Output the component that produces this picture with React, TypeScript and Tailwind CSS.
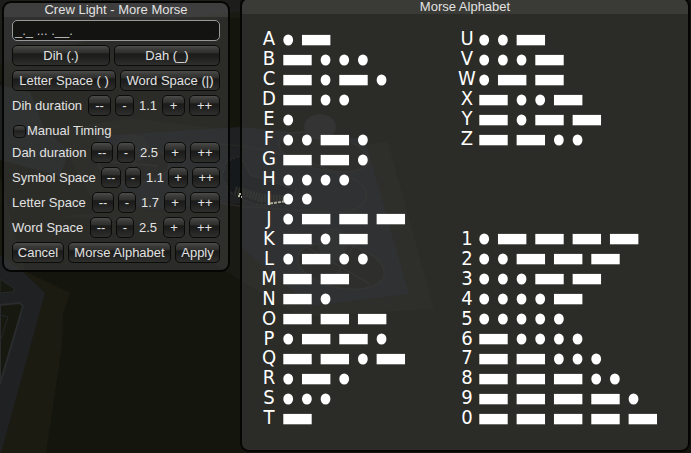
import type { ReactNode } from "react";

const LETTERS: [string, string][] = [
  ["A", ".-"], ["B", "-..."], ["C", "-.-."], ["D", "-.."], ["E", "."],
  ["F", "..-."], ["G", "--."], ["H", "...."], ["I", ".."], ["J", ".---"],
  ["K", "-.-"], ["L", ".-.."], ["M", "--"], ["N", "-."], ["O", "---"],
  ["P", ".--."], ["Q", "--.-"], ["R", ".-."], ["S", "..."], ["T", "-"],
];

const REST: [string, string][] = [
  ["U", "..-"], ["V", "...-"], ["W", ".--"], ["X", "-..-"], ["Y", "-.--"],
  ["Z", "--.."], ["", ""], ["", ""], ["", ""], ["", ""],
  ["1", ".----"], ["2", "..---"], ["3", "...--"], ["4", "....-"], ["5", "....."],
  ["6", "-...."], ["7", "--..."], ["8", "---.."], ["9", "----."], ["0", "-----"],
];

function Button({ children, className = "" }: { children: ReactNode; className?: string }) {
  return (
    <button
      className={`flex h-[21px] items-center justify-center whitespace-pre rounded-[5px] border border-[#0b0b0a] bg-[linear-gradient(180deg,#4c4c4b_0%,#3a3a39_18%,#30302f_34%,#1b1b1a_42%,#1f1f1f_60%,#2f2f2d_100%)] pb-px leading-none ${className}`}
    >
      {children}
    </button>
  );
}

function Stepper({ label, value, cols }: { label: string; value: string; cols: string }) {
  return (
    <div className={`grid h-[21px] items-center gap-x-1 whitespace-nowrap ${cols}`}>
      <span>{label}</span>
      <Button>--</Button>
      <Button>-</Button>
      <span className="pl-px">{value}</span>
      <Button>+</Button>
      <Button>++</Button>
    </div>
  );
}

// Draws one code as dots and dashes; a dot advances 18.7 units, a dash 37.3.
function Code({ code }: { code: string }) {
  let x = 0.3;
  const marks = code.split("").map((c, i) => {
    const start = x;
    x += c === "." ? 18.67 : 37.33;
    return c === "." ? (
      <ellipse key={i} cx={start + 4.9} cy="10" rx="4.9" ry="5.6" />
    ) : (
      <rect key={i} x={start} y="4.9" width="28.4" height="10.4" />
    );
  });
  return (
    <svg className="h-[20px] w-[182px] shrink-0 fill-white" viewBox="0 0 182 20">
      {marks}
    </svg>
  );
}

function MorseColumn({ rows, glyphClass }: { rows: [string, string][]; glyphClass: string }) {
  return (
    <div className="flex w-[196px] shrink-0 flex-col">
      {rows.map(([glyph, code], i) => (
        <div key={i} className="flex h-[19.95px] items-center">
          <span
            className={`-mt-[2px] w-[24px] shrink-0 text-center font-['DejaVu_Sans_Condensed','DejaVu_Sans',sans-serif] text-[20px] leading-[19px] font-stretch-condensed ${glyphClass}`}
          >
            {glyph}
          </span>
          <Code code={code} />
        </div>
      ))}
    </div>
  );
}

function Scene() {
  return (
    <svg className="absolute inset-0 h-full w-full" viewBox="0 0 691 453">
      <rect width="691" height="453" fill="#14150c" />
      <path d="M0 0H240V18L110 30L0 82Z" fill="#191a12" />
      <path d="M0 65L150 22L240 12V0H0Z" fill="#1d1e1c" />
      <path d="M0 85L30 92L45 130L70 150L60 176L0 160Z" fill="#1e2021" />
      <path d="M0 176L25 271L70 293L63 314L62 346L46 453H0Z" fill="#1b1b12" />
      <path d="M0 255L22 271L45 293L1 453H0Z" fill="#1f2123" />
      <path d="M0 279L15 289L12 292L0 293Z" fill="#17180f" stroke="#292a2a" />
      <path d="M0 305L20 303L23 306L0 384Z" fill="#17180f" stroke="#292b2c" strokeWidth="2" />
      <path d="M0 315L8 317L0 342" fill="none" stroke="#25272a" />
      <path d="M55 130L130 118L360 145L388 142L434 309L300 317L150 225L100 215Z" fill="#1a1a13" />
      <path d="M95 136L240 127L365 139L409 294L310 306L215 225L130 205Z" fill="#1e2022" />
      <path d="M60 216L240 203V280L150 225Z" fill="#1a1a14" />
      <g fill="none" stroke="#252624" strokeWidth="2">
        <ellipse cx="134" cy="164" rx="35" ry="19" fill="#1a1b16" />
        <ellipse cx="324" cy="152" rx="46" ry="18" fill="#1a1b16" transform="rotate(12 324 152)" />
        <ellipse cx="341" cy="266" rx="44" ry="22" fill="#1a1b16" transform="rotate(12 341 266)" />
        <path d="M188 155C210 130 290 154 351 178C378 189 369 215 331 212C280 209 215 208 193 194C180 185 180 165 188 155Z" />
        <path d="M308 248L370 284M330 287L354 245M110 162L158 166M134 147V181" />
      </g>
      <ellipse cx="320" cy="127" rx="16" ry="13" fill="#252624" />
      <ellipse cx="132" cy="148" rx="17" ry="14" fill="#232425" />
      <ellipse cx="333" cy="244" rx="15" ry="17" fill="#232425" />
      <path d="M226 162L240 156L250 175L278 184L296 190L286 206L253 204L232 193L222 178Z" fill="#15191b" stroke="#34352f" strokeDasharray="2 2" />
      <path d="M235 190L262 198L285 199" fill="none" stroke="#2c2d29" strokeWidth="8" strokeDasharray="2 1" />
    </svg>
  );
}

export default function App() {
  return (
    <main className="relative flex h-[453px] w-[691px] items-start overflow-hidden bg-[#14150c] font-['Liberation_Sans',Arial,sans-serif] text-[13px] text-[#e2e2e2]">
      <Scene />

      <section className="relative ml-[2px] mt-px h-[271px] w-[228px] shrink-0 overflow-hidden rounded-[9px] border-2 border-[#050604] bg-[#424242]/50">
        <h1 className="h-[14px] bg-white/7 text-center leading-[14px]">Crew Light - More Morse</h1>
        <div className="flex flex-col gap-1 px-2 pt-[3px]">
          <div className="h-[21px] rounded-[5px] border border-[#989898] bg-[#11120f]/90 pl-[2px] leading-[20px] text-[#c8c8c8]">
            _._ ... .__.
          </div>
          <div className="flex gap-1">
            <Button className="w-[98px]">Dih (.)</Button>
            <Button className="w-[106px]">Dah (_)</Button>
          </div>
          <div className="flex gap-1">
            <Button className="w-[104px]">Letter Space ( )</Button>
            <Button className="w-[100px]">Word Space (|)</Button>
          </div>
          <Stepper label="Dih duration" value="1.1" cols="grid-cols-[72px_23px_19px_20px_23px_31px]" />
          <label className="flex h-[18px] items-center pt-1 pl-px">
            <span className="h-[13px] w-[13px] rounded-[4px] border border-[#0b0b0a] bg-[linear-gradient(180deg,#444443_0%,#353534_30%,#20201f_45%,#30302f_100%)]" />
            <span className="ml-px">Manual Timing</span>
          </label>
          <Stepper label="Dah duration" value="2.5" cols="grid-cols-[75px_22px_18px_21px_22px_30px]" />
          <Stepper label="Symbol Space" value="1.1" cols="grid-cols-[85px_20px_16px_19px_20px_28px]" />
          <Stepper label="Letter Space" value="1.7" cols="grid-cols-[76px_22px_18px_20px_22px_30px]" />
          <Stepper label="Word Space" value="2.5" cols="grid-cols-[74px_22px_18px_21px_22px_31px]" />
          <div className="flex gap-1">
            <Button className="w-[52px]">Cancel</Button>
            <Button className="w-[103px]">Morse Alphabet</Button>
            <Button className="w-[45px]">Apply</Button>
          </div>
        </div>
      </section>

      <section className="relative -mt-[3px] ml-[10px] h-[455px] w-[450px] shrink-0 overflow-hidden rounded-[9px] border-2 border-[#050604] bg-[#424242]/50">
        <h2 className="h-[15px] bg-white/7 text-center leading-[15px]">Morse Alphabet</h2>
        <div className="flex pt-[16px] pl-[15px] text-white">
          <MorseColumn rows={LETTERS} glyphClass="mr-[2px]" />
          <MorseColumn rows={REST} glyphClass="ml-[2px]" />
        </div>
      </section>

      {/* Lit parts of the craft glinting over the window edge */}
      <svg className="absolute top-[190px] left-[236px] h-[16px] w-[50px]" viewBox="0 0 50 16">
        <path d="M2 6h2M4 3v2M5 7h1" stroke="#e8e7c8" strokeWidth="1.5" />
        <path d="M34 13.5L48 11.5" stroke="#aaa99a" strokeWidth="2" strokeDasharray="3 1" />
      </svg>
    </main>
  );
}
